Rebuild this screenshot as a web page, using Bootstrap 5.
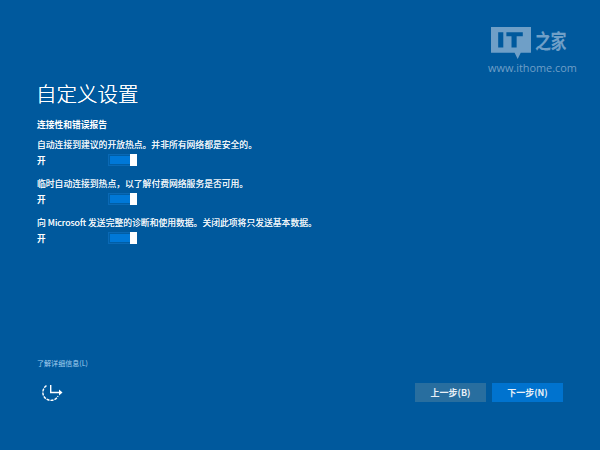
<!DOCTYPE html>
<html lang="zh">
<head>
<meta charset="utf-8">
<title>自定义设置</title>
<link href="https://cdn.jsdelivr.net/npm/bootstrap@5.3.0/dist/css/bootstrap.min.css" rel="stylesheet">
<style>
html,body{margin:0;height:450px;overflow:hidden}
body{background:#00599d;color:#fff;font-family:"Noto Sans CJK SC","Liberation Sans",sans-serif}
.oobe{width:600px;height:450px;padding:0 37px}
.brandbar{height:79px;margin-right:-13px;padding-top:27px;color:#6f9fc7}
.brand-box{width:88px}
.brand-bubble{width:40px;height:32px;flex:none;margin-left:3px}
.brand-cjk{font-size:16px;line-height:21px;margin-left:4px;font-weight:700;letter-spacing:-.5px;color:#6f9fc7;transform:scaleY(1.3);transform-origin:top left}
.brand-url{font-family:"Open Sans","Liberation Sans",sans-serif;font-size:10.9px;line-height:12px;margin-top:3px;white-space:nowrap;color:#6f9fc7}
.page-title{font-size:20.500px;font-weight:300;line-height:28px;margin:0 0 0 -1px;color:#fff;text-shadow:0 0 .6px #fff}
.sect{font-size:8.750px;font-weight:700;line-height:12px;margin-top:12px;margin-bottom:8px}
.opt{margin-bottom:12px}
.opt-text{font-size:8.800px;line-height:12px;color:#eef4f9;white-space:nowrap;text-shadow:0 0 .5px #eef4f9}
.opt-comma{font-family:"Noto Sans CJK TC",sans-serif}
.opt-row{height:12px;margin-top:3px}
.opt-state{font-size:8.6px;font-weight:700;width:71px;line-height:12px}
.tog{width:29px;height:12px;border:1px solid #0a69b5;background:#005ea6;padding:1px}
.tog-fill{background:#0078d7}
.tog-thumb{width:7px;background:#fff;margin:-2px -2px -2px 0}
.more{font-size:7.050px;line-height:11px;color:#a3cff0;white-space:nowrap}
.foot-gap{height:102px}
.foot{margin-top:14px}
.wait{width:22px;height:22px;margin-left:4px;flex:none}
.act{width:71px;height:19px;font-size:9px;font-weight:700;line-height:19px;padding:0;border:0;border-radius:0;color:#e8f0f7}
.act-back{background:#286e9f}
.act-back:hover{background:#286e9f;color:#e8f0f7}
.act-next{background:#0073cf}
.act-next:hover{background:#0073cf;color:#e8f0f7}
.acts{gap:6px}
</style>
</head>
<body>
<div class="oobe d-flex flex-column">
  <div class="brandbar d-flex justify-content-end">
    <div class="brand-box">
      <div class="d-flex align-items-start">
        <svg class="brand-bubble" viewBox="0 0 39 31"><path fill="#6f9fc7" fill-rule="evenodd" d="M0 0H39V25H29L26 31 23 25H0ZM7 5V20H12V5ZM15 5V9H20V20H25V9H31V5Z"/></svg>
        <div class="brand-cjk">之家</div>
      </div>
      <div class="brand-url">www.ithome.com</div>
    </div>
  </div>
  <h1 class="page-title">自定义设置</h1>
  <div class="sect">连接性和错误报告</div>
  <div class="opt">
    <div class="opt-text">自动连接到建议的开放热点。并非所有网络都是安全的。</div>
    <div class="opt-row d-flex align-items-center"><span class="opt-state">开</span><div class="tog d-flex"><div class="tog-fill flex-grow-1"></div><div class="tog-thumb"></div></div></div>
  </div>
  <div class="opt">
    <div class="opt-text">临时自动连接到热点<span class="opt-comma">，</span>以了解付费网络服务是否可用。</div>
    <div class="opt-row d-flex align-items-center"><span class="opt-state">开</span><div class="tog d-flex"><div class="tog-fill flex-grow-1"></div><div class="tog-thumb"></div></div></div>
  </div>
  <div class="opt">
    <div class="opt-text">向 Microsoft 发送完整的诊断和使用数据。关闭此项将只发送基本数据。</div>
    <div class="opt-row d-flex align-items-center"><span class="opt-state">开</span><div class="tog d-flex"><div class="tog-fill flex-grow-1"></div><div class="tog-thumb"></div></div></div>
  </div>
  <div class="foot-gap"></div>
  <div class="more">了解详细信息(L)</div>
  <div class="foot d-flex justify-content-between align-items-start">
    <svg class="wait" viewBox="0 0 22 22" fill="none" stroke="#fff" stroke-width="1.4">
      <path stroke-dasharray="3 1" d="M5.500 2.700A8 8 0 1 0 17 13"/>
      <path d="M9.700 2V9.500H19"/>
      <path fill="#fff" stroke="none" d="M18 6.500 21.500 9.500 18 12.500Z"/>
    </svg>
    <div class="acts d-flex">
      <button class="btn act act-back" type="button">上一步(B)</button>
      <button class="btn act act-next" type="button">下一步(N)</button>
    </div>
  </div>
</div>
<script src="https://cdn.jsdelivr.net/npm/bootstrap@5.3.0/dist/js/bootstrap.bundle.min.js"></script>
</body>
</html>
